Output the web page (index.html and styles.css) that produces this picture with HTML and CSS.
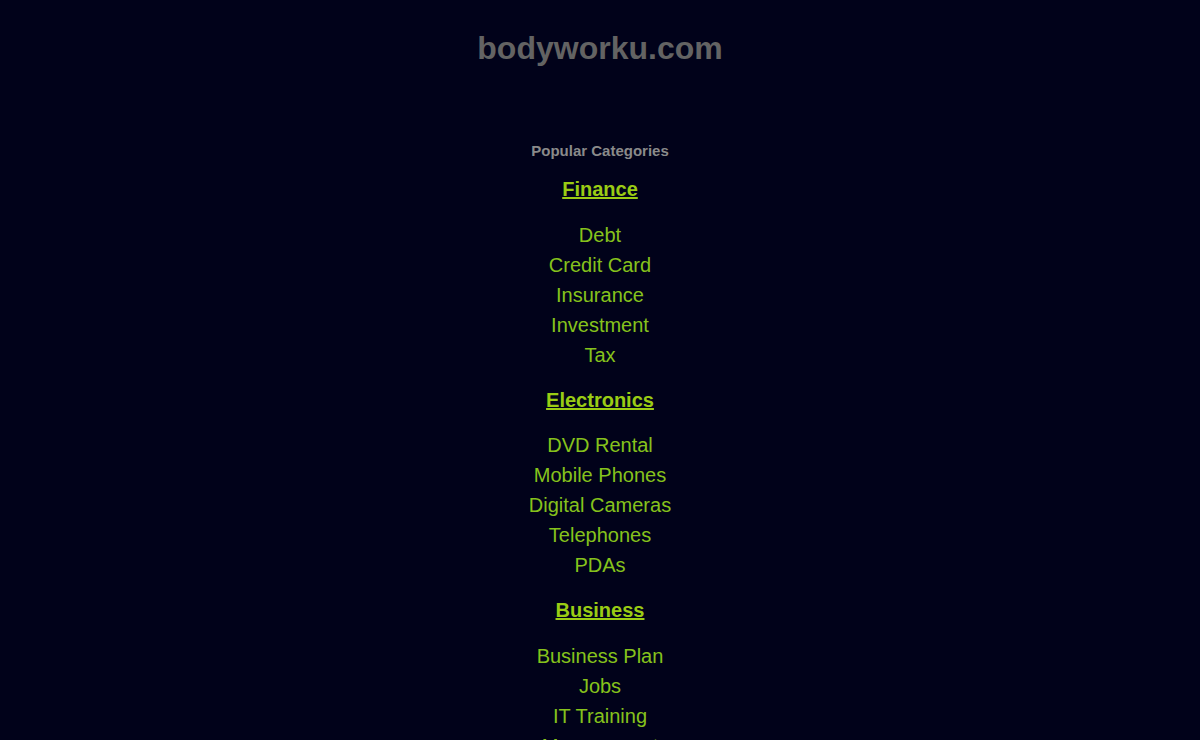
FILE: index.html
```html
<!DOCTYPE html>
<html>
<head>
<meta charset="utf-8">
<link rel="stylesheet" href="styles.css">
</head>
<body>
<div class="page">
  <h1 class="site-title">bodyworku.com</h1>
  <div class="categories">
    <div class="cat-heading">Popular Categories</div>
    <div class="cat">
      <a class="cat-title" href="#">Finance</a>
      <ul class="cat-list">
        <li><a href="#">Debt</a></li>
        <li><a href="#">Credit Card</a></li>
        <li><a href="#">Insurance</a></li>
        <li><a href="#">Investment</a></li>
        <li><a href="#">Tax</a></li>
      </ul>
    </div>
    <div class="cat">
      <a class="cat-title" href="#">Electronics</a>
      <ul class="cat-list">
        <li><a href="#">DVD Rental</a></li>
        <li><a href="#">Mobile Phones</a></li>
        <li><a href="#">Digital Cameras</a></li>
        <li><a href="#">Telephones</a></li>
        <li><a href="#">PDAs</a></li>
      </ul>
    </div>
    <div class="cat">
      <a class="cat-title" href="#">Business</a>
      <ul class="cat-list">
        <li><a href="#">Business Plan</a></li>
        <li><a href="#">Jobs</a></li>
        <li><a href="#">IT Training</a></li>
        <li><a href="#">Management</a></li>
        <li><a href="#">Marketing</a></li>
      </ul>
    </div>
  </div>
</div>
</body>
</html>
```
FILE: styles.css
```css
html, body {
  margin: 0;
  padding: 0;
  background: #01021a;
}
body {
  font-family: "Liberation Sans", Arial, sans-serif;
  text-align: center;
}
.page {
  padding-top: 28px;
}
.site-title {
  margin: 0;
  font-size: 32px;
  line-height: 40px;
  font-weight: bold;
  color: #636363;
}
.categories {
  margin-top: 73px;
}
.cat-heading {
  font-size: 15px;
  line-height: 20px;
  font-weight: bold;
  color: #8a8a8a;
  margin-bottom: 13px;
}
.cat {
  display: flex;
  flex-direction: column;
  align-items: center;
}
.cat-title {
  display: block;
  font-size: 20px;
  line-height: 30px;
  font-weight: bold;
  color: #9acc14;
  text-decoration: underline;
  margin-bottom: 15.5px;
}
.cat-list {
  list-style: none;
  margin: 0 0 15px;
  padding: 0;
}
.cat-list li {
  font-size: 20px;
  line-height: 30px;
}
.cat-list a {
  color: #86c21c;
  text-decoration: none;
}
```
